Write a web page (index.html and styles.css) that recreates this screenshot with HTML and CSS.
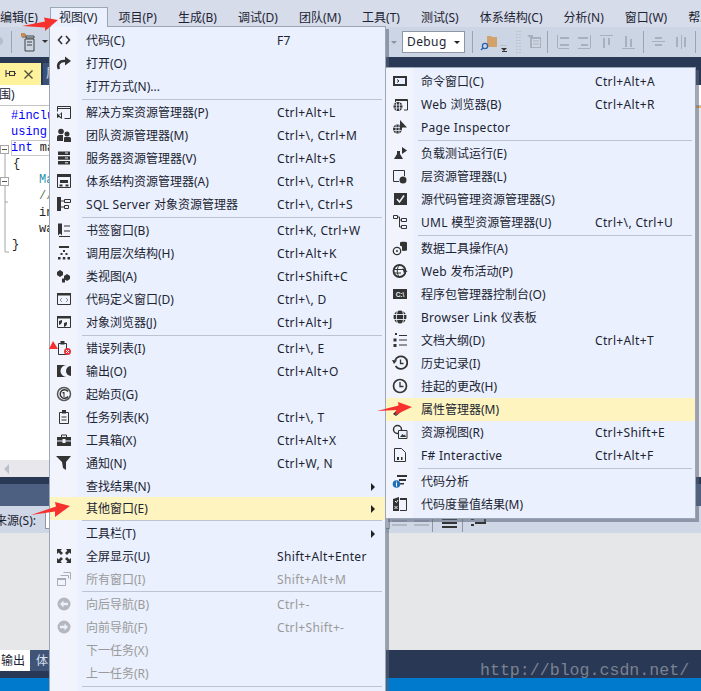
FILE: index.html
```html
<!DOCTYPE html>
<html lang="zh">
<head>
<meta charset="utf-8">
<title>视图菜单</title>
<link rel="stylesheet" href="styles.css">
</head>
<body>
<div class="page">
  <div class="menubar">
    <span class="top first">编辑(E)</span>
    <span class="top active">视图(V)</span>
    <span class="top">项目(P)</span>
    <span class="top">生成(B)</span>
    <span class="top">调试(D)</span>
    <span class="top">团队(M)</span>
    <span class="top">工具(T)</span>
    <span class="top">测试(S)</span>
    <span class="top">体系结构(C)</span>
    <span class="top">分析(N)</span>
    <span class="top">窗口(W)</span>
    <span class="top">帮助(H)</span>
  </div>

  <div class="toolbar">
    <svg class="tb-a" width="60" height="30" viewBox="0 0 60 30"><circle cx="-1" cy="14" r="4" fill="#b8bec9"/><rect x="11" y="4" width="1" height="22" fill="#9aa3b5"/><path d="M22 7h3v3h-3zM26 9h8v2h-8zM25 12h9v12H25z" fill="none" stroke="#424242"/><path d="M21 6h4v4h-4z" fill="#c98a4a"/><path d="M27 15h5M27 18h5" stroke="#424242"/><path d="M42 13h6l-3 3z" fill="#333"/></svg>
    <svg class="tb-b" width="12" height="30" viewBox="0 0 12 30"><path d="M1 14h6l-3 3z" fill="#8b92a0"/></svg>
    <div class="combo">Debug<i class="caret"></i></div>
    <svg class="tb-c" width="229" height="30" viewBox="0 0 229 30">
      <rect x="0" y="4" width="1" height="22" fill="#9aa3b5"/>
      <path d="M15 9h4l1 1h5v10H15z" fill="#d2a26c"/><circle cx="13" cy="19" r="2.6" fill="none" stroke="#2a63ad" stroke-width="1.3"/><path d="M11 21l-2 2" stroke="#2a63ad" stroke-width="1.5"/>
      <path d="M28 18h7v1h-7z" fill="#b8bec9"/><path d="M29 21h6l-3 3z" fill="#333"/><path d="M30 24h5v1h-5z" fill="#333"/>
      <path d="M45 4v22M48 4v22" stroke="#a8afbd" stroke-dasharray="1 2"/>
      <path d="M55 8h6v2h8v11H58V11l-3-3z" fill="#a8afbd"/><path d="M60 12h8v8h-8z" fill="#cfd6e5"/><path d="M61 14h6M61 17h6" stroke="#a8afbd"/>
      <rect x="75" y="4" width="1" height="22" fill="#9aa3b5"/>
      <path d="M85 8h1v14h-1zM88 10h9v2h-9zM88 17h9v2h-9zM85 22h12v-1H85z" fill="#a9b0bd"/>
      <path d="M118 8h1v14h-1zM106 10h10v2h-10zM109 17h7v2h-7zM106 22h13v-1h-13z" fill="#a9b0bd"/>
      <path d="M128 8h13v1h-13zM131 11h2v10h-2zM136 11h2v7h-2z" fill="#a9b0bd"/>
      <path d="M150 21h13v1h-13zM153 9h2v11h-2zM158 12h2v8h-2z" fill="#a9b0bd"/>
      <rect x="171" y="4" width="1" height="22" fill="#9aa3b5"/>
      <path d="M180 14h13v1h-13zM183 10h7v2h-7zM183 17h7v2h-7z" fill="#a9b0bd"/>
      <path d="M209 8h1v14h-1zM204 10h2v10h-2zM212 10h2v10h-2z" fill="#a9b0bd"/>
      <rect x="223" y="4" width="1" height="22" fill="#9aa3b5"/>
    </svg>
  </div>

  <div class="docstrip">
    <div class="doctab">
      <svg width="12" height="12" viewBox="0 0 12 12"><path d="M2 2v7M2 5.500h3M5.500 3.500h5v4h-5zM10.500 5.500H12" fill="none" stroke="#3a3a3a" stroke-width="1.100"/></svg>
      <svg width="11" height="11" viewBox="0 0 11 11"><path d="M1.500 1.500l8 8M9.500 1.500l-8 8" stroke="#55503a" stroke-width="1.400"/></svg>
    </div>
    <div class="doctab2">属性</div>
  </div>
  <div class="crumb">围)</div>

  <div class="editor">
    <svg class="outline" width="9" height="154" viewBox="0 0 9 154">
      <path d="M5 42v103h4M5 95h3" fill="none" stroke="#a5a5a5"/>
      <rect x="0.5" y="38.5" width="8" height="8" fill="#fff" stroke="#a5a5a5"/><path d="M2 42.500h5" stroke="#555"/>
      <rect x="0.5" y="70.5" width="8" height="8" fill="#fff" stroke="#a5a5a5"/><path d="M2 74.500h5" stroke="#555"/>
    </svg>
    <div class="code">
      <div class="line kw">#include</div>
      <div class="line kw">using</div>
      <div class="line current"><span class="kw">int</span> main</div>
      <div class="line brace">{</div>
      <div class="line in"><span class="ty">Ma</span></div>
      <div class="line in cm">//</div>
      <div class="line in">in</div>
      <div class="line in">wa</div>
      <div class="line brace2">}</div>
    </div>
    <div class="overview"></div>
  </div>

  <div class="hscroll"><i class="scroll-left"></i></div>
  <div class="paneltop"></div>
  <div class="panelhead"></div>
  <div class="paneltools">
    <span class="srclabel">来源(S):</span>
    <span class="srcinput"></span>
    <svg width="100" height="27" viewBox="0 0 100 27"><path d="M2 14h15v2H2zM2 18h15v2H2zM24 14h15v2H24zM24 18h15v2H24z" fill="#b1b7c3"/><rect x="42" y="9" width="1" height="17" fill="#8f97a8"/><path d="M52 12h15v2H52zM52 16h15v2H52zM52 20h15v2H52z" fill="#333"/><rect x="72" y="9" width="1" height="17" fill="#8f97a8"/><path d="M81 12h3v2h-3zM81 18h3v2h-3zM85 16h9v-4h2v6H85z" fill="#333"/></svg>
  </div>
  <div class="panelbody"></div>
  <div class="paneltabs"><span class="ptab on">输出</span><span class="ptab">体系</span></div>
  <div class="status"></div>

  <div class="menu menu-main">
    <div class="row"><span class="ic"><svg width="16" height="16" viewBox="0 0 16 16"><path d="M6 4L2.5 8 6 12M10 4l3.5 4L10 12" fill="none" stroke="#333" stroke-width="1.6"/></svg></span><span class="tx">代码(C)</span><span class="sc">F7</span></div>
    <div class="row"><span class="ic"><svg width="16" height="16" viewBox="0 0 16 16"><path d="M3 14c-2-4 0-8 5-8h2" fill="none" stroke="#333" stroke-width="2.6"/><path d="M9 1.5l6 4.5-6 4.5z" fill="#333"/></svg></span><span class="tx">打开(O)</span></div>
    <div class="row"><span class="tx tx-only">打开方式(N)...</span></div>
    <div class="sep"></div>
    <div class="row"><span class="ic"><svg width="16" height="16" viewBox="0 0 16 16"><path d="M1.500 2.500h13v12h-6M1.500 2.500v5" fill="none" stroke="#333"/><path d="M1 4h14v1H1z" fill="#333"/><path d="M1 9l2 2 3-3v7l-3-2-2 1zM3 11.500l2 1.500v-3z" fill="#333"/></svg></span><span class="tx">解决方案资源管理器(P)</span><span class="sc">Ctrl+Alt+L</span></div>
    <div class="row"><span class="ic"><svg width="16" height="16" viewBox="0 0 16 16"><circle cx="5" cy="4.500" r="2.800" fill="#333"/><circle cx="11" cy="7" r="2.500" fill="#333"/><path d="M1 14v-4c0-1 1-2 2-2h4l0 6zM8 15v-4c0-.8.7-1 1.500-1h3.500c1 0 2 .6 2 1.500V15z" fill="#333"/></svg></span><span class="tx">团队资源管理器(M)</span><span class="sc">Ctrl+\, Ctrl+M</span></div>
    <div class="row"><span class="ic"><svg width="16" height="16" viewBox="0 0 16 16"><path d="M2 1.500h12v3.500H2zM2 6.300h12v3.500H2zM2 11h12v3.500H2z" fill="#333"/><path d="M9 3h3M9 8h3M9 12.800h3" stroke="#eaf0fd"/></svg></span><span class="tx">服务器资源管理器(V)</span><span class="sc">Ctrl+Alt+S</span></div>
    <div class="row"><span class="ic"><svg width="16" height="16" viewBox="0 0 16 16"><path d="M1.500 1.500h13v13h-13z" fill="none" stroke="#333"/><path d="M1 1h14v3H1zM4 7h8v3H4zM3.500 11.500h3v2h-3zM9.500 11.500h3v2h-3z" fill="#333"/></svg></span><span class="tx">体系结构资源管理器(A)</span><span class="sc">Ctrl+\, Ctrl+R</span></div>
    <div class="row"><span class="ic"><svg width="16" height="16" viewBox="0 0 16 16"><path d="M1 1h4v14H1z" fill="#333"/><path d="M8.500 3.500h6v3h-6zM8.500 9.500h4v3h-4zM5 5h3.500M5 11h3.500" fill="none" stroke="#333"/></svg></span><span class="tx"><span class="lat">SQL Server </span>对象资源管理器</span><span class="sc">Ctrl+\, Ctrl+S</span></div>
    <div class="sep"></div>
    <div class="row"><span class="ic"><svg width="16" height="16" viewBox="0 0 16 16"><path d="M2 1.500h4v12l-2-2-2 2z" fill="#333"/><path d="M8 4h6M8 9h6M3 14.500h11" stroke="#333"/></svg></span><span class="tx">书签窗口(B)</span><span class="sc">Ctrl+K, Ctrl+W</span></div>
    <div class="row"><span class="ic"><svg width="16" height="16" viewBox="0 0 16 16"><path d="M3 1h10v2H3zM7 5h2v2H7zM4.500 8h2v2h-2zM9.500 8h2v2h-2zM2 12h2.500v2.500H2zM6.800 12h2.500v2.500H6.800zM11.500 12H14v2.500h-2.500z" fill="#333"/></svg></span><span class="tx">调用层次结构(H)</span><span class="sc">Ctrl+Alt+K</span></div>
    <div class="row"><span class="ic"><svg width="16" height="16" viewBox="0 0 16 16"><path d="M4 2l3 2v3L4 9 1 7V4zM11 6l3 2v3l-3 2-3-2V8zM6 10.500h3v4H6z" fill="#333"/></svg></span><span class="tx">类视图(A)</span><span class="sc">Ctrl+Shift+C</span></div>
    <div class="row"><span class="ic"><svg width="16" height="16" viewBox="0 0 16 16"><path d="M1.500 2.500h13v11h-13z" fill="none" stroke="#333"/><path d="M1 2h14v2.500H1z" fill="#333"/><path d="M6 7L4 9l2 2M10 7l2 2-2 2" fill="none" stroke="#8a8f99"/></svg></span><span class="tx">代码定义窗口(D)</span><span class="sc">Ctrl+\, D</span></div>
    <div class="row"><span class="ic"><svg width="16" height="16" viewBox="0 0 16 16"><path d="M1.500 2.500h13v11h-13z" fill="none" stroke="#333"/><path d="M1 2h14v2.500H1zM3 7l3-1v2l-1 2-2 1zM8 9l3-1v2l-1 2-2 1z" fill="#333"/></svg></span><span class="tx">对象浏览器(J)</span><span class="sc">Ctrl+Alt+J</span></div>
    <div class="sep"></div>
    <div class="row"><span class="ic"><svg width="16" height="16" viewBox="0 0 16 16"><path d="M2.500 3.500h8v11h-8z" fill="none" stroke="#333"/><path d="M4.500 1h4v3.500h-4z" fill="#333"/><circle cx="11.500" cy="11.500" r="3.500" fill="#e5343c"/><path d="M10 10l3 3M13 10l-3 3" stroke="#fff"/></svg></span><span class="tx">错误列表(I)</span><span class="sc">Ctrl+\, E</span></div>
    <div class="row"><span class="ic"><svg width="16" height="16" viewBox="0 0 16 16"><path d="M1 2h9.500a6 6 0 0 0 0 12H1z" fill="#333"/><path d="M15 3v10a5 5 0 0 1 0-10z" fill="#333"/></svg></span><span class="tx">输出(O)</span><span class="sc">Ctrl+Alt+O</span></div>
    <div class="row"><span class="ic"><svg width="16" height="16" viewBox="0 0 16 16"><circle cx="8" cy="8" r="6.500" fill="none" stroke="#555" stroke-width="1.500"/><path d="M12 5.500A4.300 4.300 0 1 0 12 10.500" fill="none" stroke="#333" stroke-width="1.500"/><path d="M6.500 6h2v5h-1V7.500h-1z" fill="#333"/></svg></span><span class="tx">起始页(G)</span></div>
    <div class="row"><span class="ic"><svg width="16" height="16" viewBox="0 0 16 16"><path d="M3.500 3.500h9v11h-9z" fill="none" stroke="#333"/><path d="M6 1h4v3.500H6zM5.500 7.500h5v1h-5zM5.500 10.500h5v1h-5z" fill="#333"/></svg></span><span class="tx">任务列表(K)</span><span class="sc">Ctrl+\, T</span></div>
    <div class="row"><span class="ic"><svg width="16" height="16" viewBox="0 0 16 16"><path d="M5.500 5V3h5v2" fill="none" stroke="#333"/><path d="M1 5h14v3.500H9.500V7h-3v1.500H1zM1 9.500h5.500V11h3V9.500H15V14H1z" fill="#333"/></svg></span><span class="tx">工具箱(X)</span><span class="sc">Ctrl+Alt+X</span></div>
    <div class="row"><span class="ic"><svg width="16" height="16" viewBox="0 0 16 16"><path d="M0 1h15l-5 6v8L7 13 6 7z" fill="#333"/></svg></span><span class="tx">通知(N)</span><span class="sc">Ctrl+W, N</span></div>
    <div class="row short"><span class="tx tx-only">查找结果(N)</span><i class="more"></i></div>
    <div class="row hot"><span class="tx tx-only">其他窗口(E)</span><i class="more"></i></div>
    <div class="sep thin"></div>
    <div class="row"><span class="tx tx-only">工具栏(T)</span><i class="more"></i></div>
    <div class="row"><span class="ic"><svg width="16" height="16" viewBox="0 0 16 16"><path d="M1 1h5L4.500 2.700 7 5 5 7 2.700 4.500 1 6zM15 1v5l-1.700-1.500L11 7 9 5l2.300-2.300L10 1zM1 15v-5l1.700 1.500L5 9l2 2-2.500 2.300L6 15zM15 15h-5l1.500-1.700L9 11l2-2 2.300 2.500L15 10z" fill="#333"/></svg></span><span class="tx">全屏显示(U)</span><span class="sc">Shift+Alt+Enter</span></div>
    <div class="row off"><span class="ic"><svg width="16" height="16" viewBox="0 0 16 16"><path d="M1.500 7.500h8v7h-8zM4.500 4.500h8v3M7.500 1.500h7v7" fill="none" stroke="#a9adb5"/><path d="M1 7h9v2H1z" fill="#a9adb5"/></svg></span><span class="tx">所有窗口(I)</span><span class="sc">Shift+Alt+M</span></div>
    <div class="sep thin"></div>
    <div class="row off"><span class="ic"><svg width="16" height="16" viewBox="0 0 16 16"><circle cx="8" cy="8" r="6.500" fill="#b4b7bd"/><path d="M7.500 4.500L4 8l3.500 3.500V9.200H12V6.800H7.500z" fill="#eaf0fd"/></svg></span><span class="tx">向后导航(B)</span><span class="sc">Ctrl+-</span></div>
    <div class="row off"><span class="ic"><svg width="16" height="16" viewBox="0 0 16 16"><circle cx="8" cy="8" r="6.500" fill="#b4b7bd"/><path d="M8.500 4.500L12 8l-3.500 3.500V9.200H4V6.800h4.500z" fill="#eaf0fd"/></svg></span><span class="tx">向前导航(F)</span><span class="sc">Ctrl+Shift+-</span></div>
    <div class="row off"><span class="tx tx-only">下一任务(X)</span></div>
    <div class="row off"><span class="tx tx-only">上一任务(R)</span></div>
    <div class="sep"></div>
  </div>

  <div class="menu menu-sub">
    <div class="row"><span class="ic"><svg width="16" height="16" viewBox="0 0 16 16"><path d="M1 3h14v10H1z" fill="#333"/><path d="M3 5h10v6H3z" fill="#eaf0fd"/><path d="M5 6.500L7 8 5 9.500" fill="none" stroke="#333"/></svg></span><span class="tx">命令窗口(C)</span><span class="sc">Ctrl+Alt+A</span></div>
    <div class="row"><span class="ic"><svg width="16" height="16" viewBox="0 0 16 16"><path d="M3.500 6V3.500h12V14H12" fill="none" stroke="#333"/><path d="M3 3h12v2H3z" fill="#333"/><circle cx="6" cy="10.500" r="4.500" fill="#333"/><path d="M2 9h8M2 12h8M4.500 6.500v8M7.500 6.500v8" stroke="#eaf0fd" stroke-width=".8"/></svg></span><span class="tx"><span class="lat">Web </span>浏览器(B)</span><span class="sc">Ctrl+Alt+R</span></div>
    <div class="row"><span class="ic"><svg width="16" height="16" viewBox="0 0 16 16"><circle cx="5.500" cy="10" r="4.500" fill="#333"/><path d="M1.500 8.500h8M1.500 11.500h8M4 6v8M7 6v8" stroke="#eaf0fd" stroke-width=".8"/><path d="M8 1v10l2.500-2.500H15z" fill="#333"/></svg></span><span class="tx lat">Page Inspector</span></div>
    <div class="sep"></div>
    <div class="row"><span class="ic"><svg width="16" height="16" viewBox="0 0 16 16"><path d="M5 6h3v3l3 5H2l3-5z" fill="#333"/><path d="M10 2l5 3.500-5 3.500z" fill="#333"/></svg></span><span class="tx">负载测试运行(E)</span></div>
    <div class="row"><span class="ic"><svg width="16" height="16" viewBox="0 0 16 16"><path d="M7 13.500H1.500v-11h11V8" fill="none" stroke="#333"/><circle cx="11" cy="12" r="3.500" fill="#333"/></svg></span><span class="tx">层资源管理器(L)</span></div>
    <div class="row"><span class="ic"><svg width="16" height="16" viewBox="0 0 16 16"><path d="M2 2h13v12H2z" fill="#333"/><path d="M5 8l2.500 3L12 4.500" fill="none" stroke="#eaf0fd" stroke-width="1.600"/></svg></span><span class="tx">源代码管理资源管理器(S)</span></div>
    <div class="row"><span class="ic"><svg width="16" height="16" viewBox="0 0 16 16"><path d="M1.500 1.500h4v3h-4zM9.500 4.500h5v3h-5zM9.500 11.500h5v3h-5zM5.500 3h2v10h2M7.500 6h2" fill="none" stroke="#333"/></svg></span><span class="tx"><span class="lat">UML </span>模型资源管理器(U)</span><span class="sc">Ctrl+\, Ctrl+U</span></div>
    <div class="sep"></div>
    <div class="row"><span class="ic"><svg width="16" height="16" viewBox="0 0 16 16"><path d="M8 2.500c0-1 7-1 7 0V10c0 1-3 1-5 .800V6.500A4 4 0 0 0 8 5.800z" fill="#333"/><circle cx="5" cy="11" r="3.700" fill="none" stroke="#333" stroke-width="1.300"/><circle cx="5" cy="11" r="1" fill="#333"/></svg></span><span class="tx">数据工具操作(A)</span></div>
    <div class="row"><span class="ic"><svg width="16" height="16" viewBox="0 0 16 16"><circle cx="7.500" cy="8" r="6" fill="none" stroke="#333" stroke-width="1.800"/><path d="M2 6.500h9M2 10h7" stroke="#333"/><path d="M7.500 2c-3 3-3 9 0 12" fill="none" stroke="#333"/><path d="M10.500 5l5 3.500-3 1v3z" fill="#333"/></svg></span><span class="tx"><span class="lat">Web </span>发布活动(P)</span></div>
    <div class="row"><span class="ic"><svg width="16" height="16" viewBox="0 0 16 16"><path d="M1 3h14v10H1z" fill="#333"/><text x="8" y="10.500" class="c-text" text-anchor="middle">C:\</text></svg></span><span class="tx">程序包管理器控制台(O)</span></div>
    <div class="row"><span class="ic"><svg width="16" height="16" viewBox="0 0 16 16"><circle cx="8" cy="8" r="6.500" fill="#333"/><path d="M1.500 5.500h13M1.500 10.500h13M5.500 1.500c-1.500 4-1.500 9 0 13M10.500 1.500c1.500 4 1.500 9 0 13" fill="none" stroke="#eaf0fd" stroke-width=".9"/></svg></span><span class="tx"><span class="lat">Browser Link </span>仪表板</span></div>
    <div class="row"><span class="ic"><svg width="16" height="16" viewBox="0 0 16 16"><path d="M3 1h2v2H3zM1.500 6.500h3v3h-3zM1.500 12h3v3h-3zM7 3h8v1H7zM7 7.500h8v1H7zM7 12.500h8v1H7z" fill="#333"/></svg></span><span class="tx">文档大纲(D)</span><span class="sc">Ctrl+Alt+T</span></div>
    <div class="row"><span class="ic"><svg width="16" height="16" viewBox="0 0 16 16"><path d="M3 5.500A6.300 6.300 0 1 1 3.600 11" fill="none" stroke="#333" stroke-width="1.800"/><path d="M0 5l5 .500-3 3.500z" fill="#333"/><path d="M8.500 4.500V8.500h3" fill="none" stroke="#333" stroke-width="1.300"/></svg></span><span class="tx">历史记录(I)</span></div>
    <div class="row"><span class="ic"><svg width="16" height="16" viewBox="0 0 16 16"><circle cx="8" cy="8" r="6.500" fill="none" stroke="#333" stroke-width="1.700"/><path d="M8 4v4.500h3.500" fill="none" stroke="#333" stroke-width="1.300"/></svg></span><span class="tx">挂起的更改(H)</span></div>
    <div class="row hot"><span class="ic"><svg width="16" height="16" viewBox="0 0 16 16"><path d="M1 13l6-6 3 3-6 5z" fill="#333"/></svg></span><span class="tx">属性管理器(M)</span></div>
    <div class="row"><span class="ic"><svg width="16" height="16" viewBox="0 0 16 16"><circle cx="5.500" cy="5.500" r="4" fill="none" stroke="#333" stroke-width="1.500"/><path d="M6.500 6.500h8.500v8H6.500z" fill="#eaf0fd" stroke="#333"/><path d="M8 13l2.500-3 1.500 1.500 1-1 1 2.500z" fill="#333"/></svg></span><span class="tx">资源视图(R)</span><span class="sc">Ctrl+Shift+E</span></div>
    <div class="row"><span class="ic"><svg width="16" height="16" viewBox="0 0 16 16"><path d="M2.500 1.500h7l4 4v9h-11z" fill="none" stroke="#333"/><path d="M5 10h2v3H5zM9 10h1.500v3H9z" fill="#333"/></svg></span><span class="tx lat">F# Interactive</span><span class="sc">Ctrl+Alt+F</span></div>
    <div class="sep"></div>
    <div class="row"><span class="ic"><svg width="16" height="16" viewBox="0 0 16 16"><path d="M5 2h10v2H5zM7 6h7v2H7zM8 10h4v1.500H8z" fill="#333"/><circle cx="4.500" cy="11" r="3.800" fill="#1e71b8"/><path d="M4 8.500h1v1H4zM4 10h1v3.500H4z" fill="#fff"/></svg></span><span class="tx">代码分析</span></div>
    <div class="row"><span class="ic"><svg width="16" height="16" viewBox="0 0 16 16"><path d="M8 2.500h6.500v12H8" fill="none" stroke="#333"/><path d="M1 3l6-2v14H1z" fill="#333"/><path d="M8 2h7v2H8z" fill="#333"/><path d="M3 5l1.500 1.500L6 4M2.500 10l3 3M5.500 10l-3 3" fill="none" stroke="#eaf0fd"/></svg></span><span class="tx">代码度量值结果(M)</span></div>
  </div>

  <svg class="arrows" width="701" height="691" viewBox="0 0 701 691">
    <path d="M22 26L45 21.500 44 17.500 58 20 45 31 45 27.500z" fill="#f7322e"/>
    <path d="M53 341l5 8H49z" fill="#f7322e"/>
    <path d="M31 515L56 506.500 55 502 70 506 55 517 55 511.500z" fill="#f7322e"/>
    <path d="M377 411L398.500 405.500 398 402 412 407 395 415 396.500 410z" fill="#f7322e"/>
  </svg>
  <div class="watermark">http://blog.csdn.net/</div>
</div>
</body>
</html>
```
FILE: styles.css
```css
* { box-sizing: border-box; }
html, body { margin: 0; padding: 0; background: #fff; }
.page {
  position: relative;
  width: 701px;
  height: 691px;
  overflow: hidden;
  display: flex;
  flex-direction: column;
  font-family: "Noto Sans", "Noto Sans CJK SC", sans-serif;
  font-size: 12px;
  color: #1c2433;
}
.page > * { min-height: 0; }

/* top menu bar */
.menubar {
  flex: 0 0 27px;
  display: flex;
  align-items: flex-end;
  background: #d7dcea;
  white-space: nowrap;
  overflow: hidden;
}
.top {
  flex: none;
  height: 20px;
  line-height: 20px;
  padding: 0 10.500px;
  border-top: 1px solid transparent;
}
.top.first { padding: 0; width: 50px; }
.top.active {
  position: relative;
  z-index: 3;
  background: #eaf0fd;
  border: 1px solid #9ba7b7;
  border-bottom: 0;
  padding: 0 8px;
  width: 58px;
}

/* toolbar */
.toolbar {
  flex: 0 0 30px;
  display: flex;
  align-items: center;
  background: #ccd5e4;
}
.tb-a { margin-right: 330px; flex: none; }
.tb-b { flex: none; }
.combo {
  flex: none;
  position: relative;
  width: 63px;
  height: 22px;
  line-height: 20px;
  padding-left: 4px;
  background: #fff;
  border: 1px solid #8e96a6;
  letter-spacing: .4px;
}
.caret {
  position: absolute;
  right: 4px;
  top: 9px;
  border: 3px solid transparent;
  border-top: 3px solid #222;
}
.tb-c { flex: none; margin-left: 7px; }

/* doc tabs */
.docstrip {
  flex: 0 0 28px;
  display: flex;
  align-items: flex-end;
  background: #293955;
}
.doctab {
  width: 41px;
  height: 22px;
  background: #fff29d;
  display: flex;
  align-items: center;
  padding-left: 4px;
  gap: 7px;
}
.doctab2 {
  margin-left: 2px;
  height: 22px;
  width: 60px;
  padding-left: 3px;
  line-height: 22px;
  background: #3c5178;
  color: #d8e0ee;
  white-space: nowrap;
}
.crumb {
  flex: 0 0 21px;
  line-height: 20px;
  background: #fff;
  text-indent: -1px;
  border-bottom: 1px solid #c4c4c4;
}

/* editor */
.editor {
  flex: 0 0 354px;
  display: flex;
  background: #fff;
  font-family: "Liberation Mono", "Noto Sans CJK SC", monospace;
  font-size: 12px;
  color: #222;
  overflow: hidden;
}
.outline { flex: none; margin-top: 1px; }
.code { flex: 1; padding: 2px 0 0 2px; }
.line { height: 16.100px; line-height: 16px; white-space: nowrap; }
.kw { color: #0000ff; }
.ty { color: #2b91af; }
.cm { color: #5a7a5a; }
.current { outline: 1px solid #c8c8c8; outline-offset: -1px; }
.brace { padding-left: 2px; }
.brace2 { padding-left: 1px; }
.in { padding-left: 28px; }
.overview { flex: 0 0 5px; background: #e8e8ec; border-top: 2px solid #eeb25e; }

.hscroll {
  flex: 0 0 17px;
  display: flex;
  align-items: center;
  padding-left: 4px;
  background: #e8e8ec;
}
.scroll-left {
  border: 5px solid transparent;
  border-left-width: 0;
  border-right: 5px solid #b8c0cc;
}
.paneltop { flex: 0 0 7px; background: #293955; }
.panelhead { flex: 0 0 22px; background: #4d6082; }
.paneltools {
  flex: 0 0 27px;
  display: flex;
  background: #cfd6e5;
  white-space: nowrap;
}
.srclabel { line-height: 27px; padding-top: 1px; height: 27px; margin-left: -5px; width: 50px; flex: none; }
.srcinput { flex: 0 0 345px; height: 19px; margin-top: 4px; background: #fff; border: 1px solid #8e96a6; }
.panelbody { flex: 0 0 117px; background: #e6e7e8; }
.paneltabs { flex: 0 0 28px; display: flex; background: #293955; align-items: flex-start; }
.ptab {
  height: 21px;
  line-height: 21px;
  padding: 0 4px 0 6px;
  color: #d8e0ee;
  background: #3f5477;
}
.ptab.on { background: #fff; color: #1c2433; width: 30px; padding: 0 0 0 1px; }
.status { flex: 0 0 13px; background: #007acc; }

/* menus */
.menu {
  position: absolute;
  background: linear-gradient(to right, #f1f4fc 27px, #eaf0fd 27px);
  border: 1px solid #9ba7b7;
  box-shadow: 3px 3px 0 rgba(90, 100, 120, .55);
  padding-top: 1.500px;
}
.menu-main {
  z-index: 2;
  left: 49px;
  top: 26px;
  width: 337px;
  height: 680px;
  --tx: 36px;
  --sc: 191px;
}
.menu-sub {
  z-index: 3;
  left: 385px;
  top: 67px;
  width: 311px;
  height: 452px;
  --tx: 35px;
  --sc: 174px;
}
.row {
  position: relative;
  display: flex;
  align-items: center;
  height: 23px;
  white-space: nowrap;
}
.row.short { height: 22px; }
.ic {
  flex: 0 0 var(--tx);
  display: flex;
  padding-left: 6px;
  align-items: center;
}
.ic svg { display: block; flex: none; }
.tx { flex: 0 0 var(--sc); }
.tx-only { margin-left: var(--tx); }
.sc { flex: none; letter-spacing: .35px; }
.lat { letter-spacing: .3px; }
.sep { height: 3px; margin: 0 3px 0 32px; position: relative; }
.sep.thin { height: 2px; }
.sep::after { content: ""; position: absolute; left: 0; right: 0; top: 1px; height: 1px; background: #bdc3d2; }
.sep.thin::after { top: 0; }
.hot { background: #fdf4bf; }
.off { color: #9a9a9a; }
.more {
  position: absolute;
  right: 10px;
  top: 8px;
  border-left: 4px solid #222;
  border-top: 4px solid transparent;
  border-bottom: 4px solid transparent;
}
.c-text { font-family: "Liberation Sans", sans-serif; font-size: 6.500px; font-weight: 700; fill: #eaf0fd; }

/* annotations */
.arrows { position: absolute; left: 0; top: 0; z-index: 5; pointer-events: none; }
.watermark {
  position: absolute;
  z-index: 6;
  left: 480px;
  top: 661px;
  font-family: "Liberation Mono", monospace;
  font-size: 16.600px;
  line-height: 20px;
  color: rgba(150, 155, 165, .75);
  white-space: nowrap;
}
```
